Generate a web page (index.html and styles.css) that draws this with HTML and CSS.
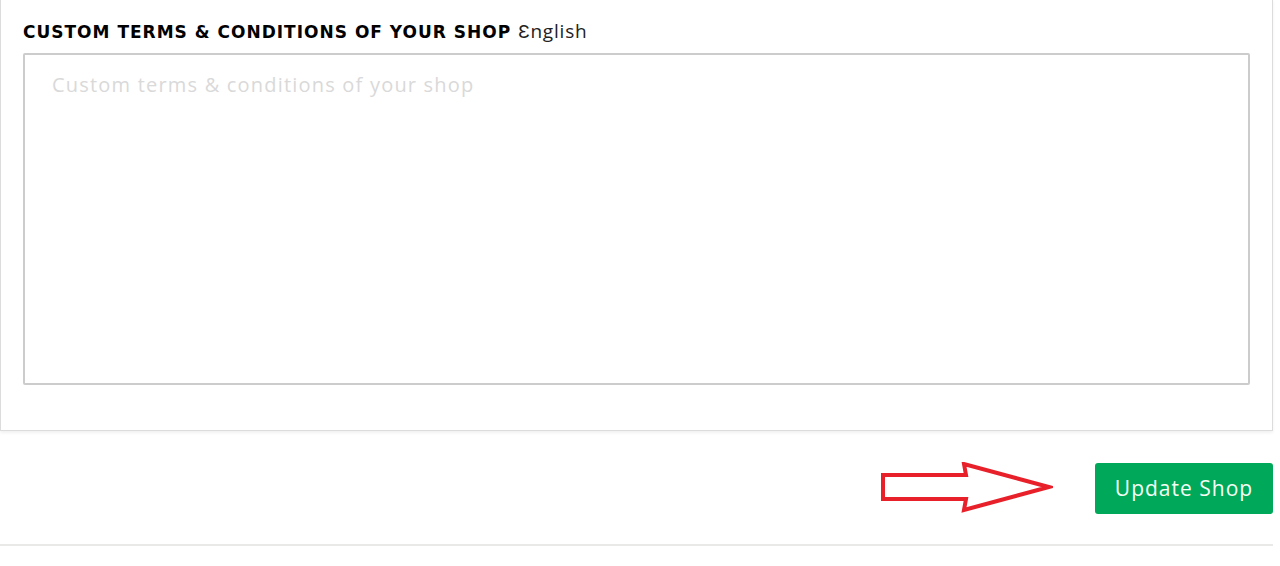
FILE: index.html
```html
<!doctype html>
<html lang="en">
<head>
	<meta charset="UTF-8">
	<title>Shop settings</title>
	<link rel="stylesheet" href="styles.css">
</head>
<body>
	<div class="card">
		<label for="terms" class="label">Custom terms &amp; conditions of your shop <span class="lang">Ɛnglish</span></label>
		<textarea id="terms" class="terms" placeholder="Custom terms &amp; conditions of your shop"></textarea>
	</div>
	<div class="footer">
		<!-- arrow drawn over the screenshot -->
		<svg class="arrow" width="174" height="52" viewBox="0 0 174 52">
			<polygon points="4,13 87,13 85,2 170,25 85,48 87,37 4,37" fill="none" stroke="#e8202a" stroke-width="4" stroke-linejoin="miter"/>
		</svg>
		<button class="update">Update Shop</button>
	</div>
</body>
</html>
```

FILE: styles.css
```css
body{
	margin: 0;
	background: #fff;
	font-family: "Open Sans", "Liberation Sans", sans-serif;
}
.card{
	width: 1273px;
	box-sizing: border-box;
	margin-top: -1px;
	padding: 19px 22px 45px 22px;
	border: 1px solid #dcdcdc;
	box-shadow: 0 2px 3px rgba(0,0,0,0.06);
	background: #fff;
}
.label{
	display: block;
	height: 34px;
	line-height: 24px;
	font-family: "DejaVu Sans", sans-serif;
	font-weight: bold;
	font-size: 17px;
	letter-spacing: 1px;
	text-transform: uppercase;
	color: #000;
}
.lang{
	font-family: "Open Sans", sans-serif;
	font-weight: 400;
	text-transform: none;
	font-size: 19px;
	letter-spacing: 0.8px;
	color: #222;
}
.terms{
	display: block;
	width: 100%;
	height: 332px;
	box-sizing: border-box;
	border: 2px solid #cccccc;
	border-radius: 2px;
	padding: 16px 27px;
	font-family: "Open Sans", sans-serif;
	font-size: 20px;
	letter-spacing: 1.2px;
	resize: none;
	outline: none;
}
.terms::placeholder{
	color: #d9d9d9;
}
.footer{
	width: 1273px;
	display: flex;
	justify-content: flex-end;
	align-items: center;
	gap: 42px;
	padding: 31px 0 30px 0;
	border-bottom: 2px solid #e9e9e7;
}
.arrow{
	display: block;
}
.update{
	width: 178px;
	height: 51px;
	border: none;
	border-radius: 3px;
	background: #00a85a;
	color: #f4fff4;
	font-family: "Open Sans", sans-serif;
	font-size: 21px;
	letter-spacing: 1px;
	cursor: pointer;
}
```
